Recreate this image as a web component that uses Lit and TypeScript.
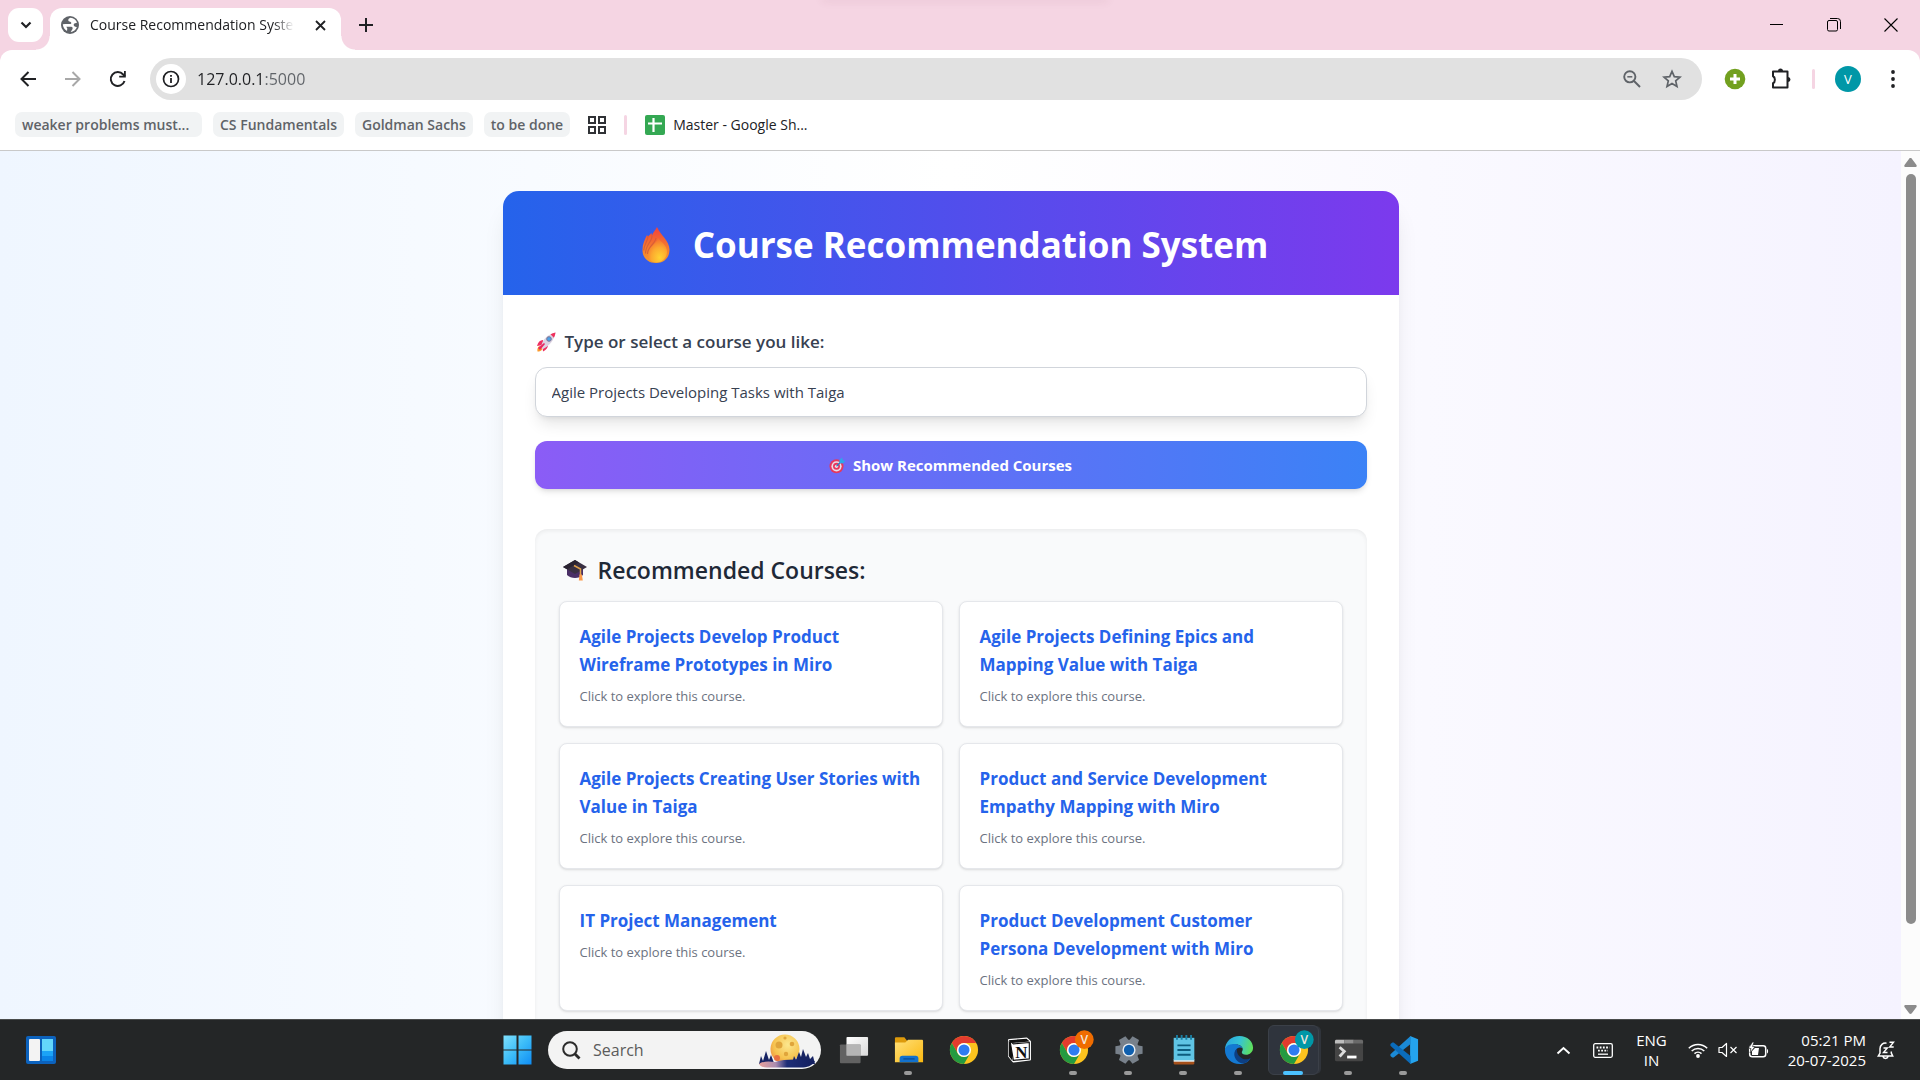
import { LitElement, html, css, svg } from "lit";
import { customElement, property } from "lit/decorators.js";

const sans = css`"Open Sans", "Noto Sans", "Segoe UI", sans-serif`;

const reset = css`
  *, *::before, *::after { box-sizing: border-box; }
  button, input { font: inherit; color: inherit; margin: 0; }
  button { border: 0; padding: 0; background: none; display: grid; place-items: center; }
  a { color: inherit; text-decoration: none; }
  svg { display: block; flex: none; }
`;

@customElement("browser-chrome")
export class BrowserChrome extends LitElement {
  static styles = [reset, css`
    :host { display: block; background: #f5d5e3; color: #202124; }
    .tabs { display: flex; height: 50px; padding: 8px 0 0 8px; align-items: flex-start; position: relative; }
    .tabs::before { content: ""; position: absolute; left: 822px; width: 286px; top: -4px; height: 4px; box-shadow: 0 1px 8px rgba(120, 60, 90, 0.12); }
    .tab-search { width: 35px; height: 34px; border-radius: 11px; background: #fff; }
    .tab { position: relative; display: flex; align-items: center; width: 291px; height: 42px; margin-left: 7px; padding: 0 12px 8px 11px; background: #fff; border-radius: 12px 12px 0 0; }
    .tab::before, .tab::after { content: ""; position: absolute; bottom: 0; width: 14px; height: 14px; }
    .tab::before { right: 100%; background: radial-gradient(circle at 0 0, transparent 13px, #fff 14px); }
    .tab::after { left: 100%; background: radial-gradient(circle at 100% 0, transparent 13px, #fff 14px); }
    .tab-title { flex: 1; margin-left: 11px; margin-right: 14px; overflow: hidden; white-space: nowrap; font-size: 14px; line-height: 20px; mask-image: linear-gradient(90deg, #000 88%, transparent 98%); }
    .tab-close { width: 17px; height: 20px; }
    .new-tab { width: 34px; height: 34px; margin-left: 8px; }
    .window { margin-left: auto; display: flex; padding-right: 1px; }
    .window button { width: 57px; height: 34px; }
    .tools { display: flex; align-items: center; height: 58px; padding: 0 15px 0 10px; background: #fff; border-radius: 12px 12px 0 0; }
    .nav { width: 36px; height: 36px; }
    .nav + .nav { margin-left: 9px; }
    .omni { flex: 1; display: flex; align-items: center; height: 42px; margin-left: 14px; padding: 0 10px 0 6px; border-radius: 21px; background: #e1e1e1; }
    .info { width: 30px; height: 30px; border-radius: 50%; background: #fff; }
    .url { flex: 1; min-width: 0; height: 30px; margin-left: 11px; padding: 0; border: 0; outline: 0; font-size: 16px; color: transparent; background: linear-gradient(90deg, #202124 67px, #5f6368 67px); background-clip: text; -webkit-background-clip: text; }
    .omni .act { width: 40px; height: 36px; }
    .ext { width: 32px; height: 36px; margin-left: 17px; }
    .ext + .ext { margin-left: 14px; }
    .rule { width: 3px; height: 20px; border-radius: 2px; background: #f5d5e3; }
    .tools .rule { margin: 0 20px 0 15px; }
    .avatar { width: 26px; height: 26px; border-radius: 50%; background: #0097a7; color: #fff; font-size: 13px; }
    .menu { width: 24px; height: 36px; margin-left: 20px; }
    .marks { display: flex; align-items: center; gap: 11px; height: 43px; padding: 0 15px 9px; background: #fff; border-bottom: 1px solid #c9c9c9; font-size: 14px; line-height: 20px; }
    .chip { height: 25px; padding: 0 7px; border-radius: 7px; background: #f1f3f4; color: #5f6368; font-weight: 600; font-size: 14px; display: flex; align-items: center; white-space: nowrap; }
    .wide { width: 187px; }
    .apps { margin: 0 7px; }
    .sheet { display: flex; align-items: center; gap: 8px; margin-left: 7px; }
  `];

  render() {
    return html`
      <div class="tabs">
        <button class="tab-search" aria-label="Search tabs">
          <svg width="12" height="8" viewBox="0 0 12 8"><path d="M1.5 1.5 6 6l4.500-4.500" fill="none" stroke="#202124" stroke-width="2.200"/></svg>
        </button>
        <div class="tab">
          <svg width="18" height="18" viewBox="0 0 18 18"><circle cx="9" cy="9" r="9" fill="#5f6368"/><path d="M9.500 1.800c-1.500.4-2.400 1.500-2.200 2.700.3 1.300 1.900 1 2.700 1.700.8.800.1 1.900-1.200 1.900H4.200L1.800 8.300c.1 2.900 1.800 5.400 4.200 6.600l.3-2.500-1-1.700 4.800.1c1.700.2 1.900 1.400 1.200 2.600l-1.700 2.700c3-.5 5.300-2.500 6.300-5.200-1.300.2-2.700-.2-3.100-1.300-.5-1.500.5-2.500 2.400-2.600L16 6.500c-.9-2.500-3.300-4.400-6.500-4.700z" fill="#fff"/></svg>
          <span class="tab-title">Course Recommendation System</span>
          <button class="tab-close" aria-label="Close tab">
            <svg width="11" height="11" viewBox="0 0 11 11"><path d="m1 1 9 9m0-9-9 9" stroke="#202124" stroke-width="1.800"/></svg>
          </button>
        </div>
        <button class="new-tab" aria-label="New tab">
          <svg width="14" height="14" viewBox="0 0 14 14"><path d="M7 0v14M0 7h14" stroke="#202124" stroke-width="2"/></svg>
        </button>
        <div class="window">
          <button aria-label="Minimize"><svg width="14" height="14" viewBox="0 0 14 14"><path d="M0 6.500h13" stroke="#000"/></svg></button>
          <button aria-label="Restore"><svg width="14" height="14" viewBox="0 0 14 14"><g fill="none" stroke="#000"><rect x=".5" y="2.500" width="10" height="10.500" rx="1.500"/><path d="M3 .5h7.500a3 3 0 0 1 3 3V11"/></g></svg></button>
          <button aria-label="Close window"><svg width="14" height="14" viewBox="0 0 14 14"><path d="m.5.5 13 13m0-13-13 13" stroke="#000" stroke-width="1.100"/></svg></button>
        </div>
      </div>
      <div class="tools">
        <button class="nav" aria-label="Back"><svg width="16" height="16" viewBox="0 0 16 16"><path d="M16 8H2M8.500 1 1.500 8l7 7" fill="none" stroke="#202124" stroke-width="2"/></svg></button>
        <button class="nav" aria-label="Forward"><svg width="16" height="16" viewBox="0 0 16 16"><path d="M0 8h14M7.500 1l7 7-7 7" fill="none" stroke="#a8a8a8" stroke-width="2"/></svg></button>
        <button class="nav" aria-label="Reload"><svg width="18" height="18" viewBox="0 0 18 18"><path d="M15.500 11a7 7 0 1 1-1.300-6.500L16 6.300" fill="none" stroke="#202124" stroke-width="2"/><path d="M16.800 1v6.600h-6.600V5.700H15V1z" fill="#202124"/></svg></button>
        <div class="omni">
          <button class="info" aria-label="View site information"><svg width="18" height="18" viewBox="0 0 18 18"><circle cx="9" cy="9" r="7.500" fill="none" stroke="#202124" stroke-width="1.700"/><path d="M9 8v5M9 5v1.800" stroke="#202124" stroke-width="1.800"/></svg></button>
          <input class="url" aria-label="Address" value="127.0.0.1:5000">
          <button class="act" aria-label="Zoom"><svg width="18" height="18" viewBox="0 0 18 18"><g fill="none" stroke="#5f6368" stroke-width="1.900"><circle cx="6.800" cy="6.800" r="5.600"/><path d="m11 11 6 6"/><path d="M4.300 6.800h5" stroke-width="1.500"/></g></svg></button>
          <button class="act" aria-label="Bookmark this page"><svg width="20" height="20" viewBox="0 0 20 20"><path d="m10 2.300 2.300 5.300 5.700.5-4.300 3.800 1.300 5.700-5-3-5 3 1.300-5.700L2 8.100l5.700-.5z" fill="none" stroke="#5f6368" stroke-width="1.700"/></svg></button>
        </div>
        <button class="ext" aria-label="Add-on"><svg width="22" height="22" viewBox="0 0 22 22"><circle cx="11" cy="11" r="10.300" fill="#72a01f"/><path d="M11 6v10M6 11h10" stroke="#fff" stroke-width="3"/></svg></button>
        <button class="ext" aria-label="Extensions"><svg width="22" height="22" viewBox="0 0 22 22"><path d="M3 3.500h14.500v16H3v-4.300c2.500-1 2.500-6 0-7z" fill="none" stroke="#202124" stroke-width="2" stroke-linejoin="round"/><path d="M8 3a2.500 2.500 0 0 1 5 0zM18 9a2.500 2.500 0 0 1 0 5z" fill="#202124"/></svg></button>
        <span class="rule"></span>
        <button class="avatar" aria-label="Profile">V</button>
        <button class="menu" aria-label="Menu"><svg width="4" height="18" viewBox="0 0 4 18" fill="#202124"><circle cx="2" cy="2" r="1.900"/><circle cx="2" cy="9" r="1.900"/><circle cx="2" cy="16" r="1.900"/></svg></button>
      </div>
      <nav class="marks" aria-label="Bookmarks">
        <button class="chip wide">weaker problems must...</button>
        <button class="chip">CS Fundamentals</button>
        <button class="chip">Goldman Sachs</button>
        <button class="chip">to be done</button>
        <button class="apps" aria-label="Apps"><svg width="18" height="18" viewBox="0 0 18 18" fill="none" stroke="#303236" stroke-width="2"><path d="M1 1h6v6H1zM11 1h6v6h-6zM1 11h6v6H1zM11 11h6v6h-6z"/></svg></button>
        <span class="rule"></span>
        <a class="sheet" href="#sheet"><svg width="20" height="20" viewBox="0 0 20 20"><rect width="20" height="20" rx="2" fill="#34a853"/><path d="M8.500 3v14M3 8.500h14" stroke="#fff" stroke-width="2.200"/></svg>Master - Google Sh...</a>
      </nav>`;
  }
}

@customElement("course-card")
export class CourseCard extends LitElement {
  @property() heading = "";
  static styles = [reset, css`
    :host { display: block; }
    .card { display: block; height: 100%; padding: 21px 20px 20px; background: #fff; border: 1px solid #e5e7eb; border-radius: 8px; box-shadow: 0 1px 3px rgba(0, 0, 0, 0.1), 0 1px 2px -1px rgba(0, 0, 0, 0.1); }
    .title { margin: 0; font-size: 17px; line-height: 28px; font-weight: 700; color: #2563eb; }
    .note { margin: 7px 0 0; font-size: 13px; line-height: 20px; color: #6b7280; }
  `];
  render() {
    return html`<a class="card" href="#course">
      <h3 class="title">${this.heading}</h3>
      <p class="note">Click to explore this course.</p>
    </a>`;
  }
}

const courses = [
  "Agile Projects Develop Product Wireframe Prototypes in Miro",
  "Agile Projects Defining Epics and Mapping Value with Taiga",
  "Agile Projects Creating User Stories with Value in Taiga",
  "Product and Service Development Empathy Mapping with Miro",
  "IT Project Management",
  "Product Development Customer Persona Development with Miro",
];

@customElement("course-page")
export class CoursePage extends LitElement {
  static styles = [reset, css`
    :host { display: flex; min-height: 0; overflow: hidden; background: #fcfcfc; }
    .view { flex: 1; overflow: hidden; padding: 40px 24px; background: linear-gradient(90deg, #eff6ff, #fff 50%, #f5f3ff); }
    .sheet { max-width: 896px; margin: 0 auto; background: #fff; border-radius: 16px; box-shadow: 0 20px 25px -5px rgba(0, 0, 0, 0.1), 0 8px 10px -6px rgba(0, 0, 0, 0.1); }
    .hero { display: flex; align-items: center; justify-content: center; gap: 22px; padding: 34px 24px 30px 32px; background: linear-gradient(90deg, #2563eb, #7c3aed); border-radius: 16px 16px 0 0; color: #fff; }
    .hero h1 { margin: 0; font-size: 35px; line-height: 40px; font-weight: 700; }
    .body { padding: 33px 32px 32px; }
    .label { display: flex; align-items: center; gap: 8px; margin-bottom: 11px; font-size: 17px; line-height: 28px; font-weight: 600; color: #374151; }
    .field { display: block; width: 100%; height: 50px; padding: 0 16px; border: 1px solid #d1d5db; border-radius: 12px; outline: 0; background: #fff; color: #374151; font-size: 15px; box-shadow: 0 10px 15px -3px rgba(0, 0, 0, 0.1), 0 4px 6px -4px rgba(0, 0, 0, 0.1); }
    .submit { display: flex; align-items: center; justify-content: center; gap: 7px; width: 100%; height: 48px; margin: 24px 0 40px; border-radius: 12px; background: linear-gradient(90deg, #8b5cf6, #3b82f6); color: #fff; font-size: 15px; font-weight: 700; box-shadow: 0 4px 6px -1px rgba(0, 0, 0, 0.1), 0 2px 4px -2px rgba(0, 0, 0, 0.1); }
    .panel { padding: 25px 24px 24px; border-radius: 12px; background: #f9fafb; box-shadow: inset 0 2px 4px rgba(0, 0, 0, 0.06); }
    .panel h2 { display: flex; align-items: center; gap: 10px; margin: 0 0 15px; padding-left: 3px; font-size: 23px; line-height: 32px; font-weight: 600; color: #1f2937; }
    .grid { display: grid; grid-template-columns: 1fr 1fr; gap: 16px; }
    .bar { width: 19px; display: flex; flex-direction: column; align-items: center; padding: 7px 0 5px; }
    .track { flex: 1; width: 10px; margin: 7px 0; }
    .thumb { height: 91%; border-radius: 5px; background: #8b8b8b; }
  `];

  private flame = svg`<svg width="30" height="38" viewBox="0 0 30 38">
    <defs>
      <linearGradient id="f1" x1="0" y1="0" x2="0" y2="1"><stop offset="0" stop-color="#f2403a"/><stop offset=".55" stop-color="#f4792f"/><stop offset="1" stop-color="#f59a2c"/></linearGradient>
      <radialGradient id="f2" cx=".62" cy=".8" r=".75"><stop offset="0" stop-color="#ffd233"/><stop offset=".55" stop-color="#fca92f"/><stop offset="1" stop-color="#f5702f"/></radialGradient>
    </defs>
    <path d="M16 1c-1.500 3-4 5.500-5 8.500L10.500 7 7 10.500 6 9C3.500 14 1.500 18 1.500 24c0 8 5.500 13 13.500 13s13.500-5 13.500-13.500C28.500 15 19.500 9 16 1z" fill="url(#f1)"/>
    <path d="M17 12c-1 6-10.500 9-10.500 16 0 5 4 8.500 9 8.500s10.500-4 10.500-11c0-6.500-6-9.500-9-13.500z" fill="url(#f2)"/>
    <path d="M7 10.500c0 4-4 8-4.300 14M11 9.500c.5 6-6.500 9-6.500 18M15 12c-1 6-8.500 9-8.500 16" fill="none" stroke="#cf5a3a" stroke-opacity=".8" stroke-width="1.100"/>
  </svg>`;

  private rocket = svg`<svg width="22" height="22" viewBox="0 0 22 22">
    <path d="M4.500 15c-2 1-2.500 3.500-2 5.500C4.500 20.500 6.500 20 7.500 18z" fill="#fc9a2c"/>
    <path d="M8 9c-3 0-5 2-6 6l6-1zM13 14c0 3-2 5-5 6.500l-.5-6z" fill="#ee2f62"/>
    <path d="M6 16C7 9 12 3.500 20.500 1.500 19.500 9 14 15 8 18z" fill="#dcd3e2"/>
    <path d="M15.500 3.300c1.500-1 3.200-1.500 5-1.800-.2 2-.7 3.700-1.600 5.300z" fill="#f0305c"/>
    <circle cx="14" cy="8" r="2.300" fill="#4da3e8" stroke="#7b7594"/>
    <path d="M3 17l6-5 1 1-5 6z" fill="#e8265f"/>
  </svg>`;

  private target = svg`<svg width="17" height="17" viewBox="0 0 17 17">
    <circle cx="7.500" cy="9.300" r="7" fill="#e6385f"/><circle cx="7.500" cy="9.300" r="5.100" fill="#eadfe8"/><circle cx="7.500" cy="9.300" r="3.500" fill="#e6385f"/><circle cx="7.500" cy="9.300" r="1.600" fill="#f2e6ee"/>
    <path d="m7.500 9.300 5-5" stroke="#2b7fc4" stroke-width="1.300"/><path d="m10.500 6-.2-2.800L13 .5l.8 2.700 2.700.8-2.800 2.500z" fill="#2da8ea"/>
  </svg>`;

  private cap = svg`<svg width="26" height="24" viewBox="0 0 26 24">
    <path d="M5 10v7c4 4 12 4 16 0v-7z" fill="#4a2f66"/><path d="M13 2 1 9l12 7 12-7z" fill="#3a3042"/><path d="M13 2 1 9l4 2.300L17 4.500z" fill="#2a2331"/>
    <path d="M12 7.500 18.500 11v7" fill="none" stroke="#e0a04a" stroke-width="1.500"/><path d="M17.500 16.500h2.400l.9 6h-4z" fill="#fb9a4b"/>
  </svg>`;

  render() {
    return html`
      <main class="view">
        <div class="sheet">
          <header class="hero">${this.flame}<h1>Course Recommendation System</h1></header>
          <div class="body">
            <label class="label" for="course">${this.rocket}Type or select a course you like:</label>
            <input class="field" id="course" value="Agile Projects Developing Tasks with Taiga">
            <button class="submit">${this.target}Show Recommended Courses</button>
            <section class="panel">
              <h2>${this.cap}Recommended Courses:</h2>
              <div class="grid">
                ${courses.map((c) => html`<course-card .heading=${c}></course-card>`)}
              </div>
            </section>
          </div>
        </div>
      </main>
      <div class="bar">
        <svg width="13" height="9" viewBox="0 0 13 9"><path d="M6.500 0c.8 0 1.300.5 1.700 1.200L12.500 7c.5 1 .2 2-.8 2H1.300c-1 0-1.300-1-.8-2l4.300-5.800C5.200.5 5.700 0 6.500 0z" fill="#8b8b8b"/></svg>
        <div class="track"><div class="thumb"></div></div>
        <svg width="13" height="9" viewBox="0 0 13 9"><path d="M6.500 9c.8 0 1.300-.5 1.700-1.200L12.500 2c.5-1 .2-2-.8-2H1.300c-1 0-1.300 1-.8 2l4.300 5.800C5.200 8.500 5.700 9 6.500 9z" fill="#8b8b8b"/></svg>
      </div>`;
  }
}

const chromeLogo = svg`
  <circle cx="16" cy="16" r="15" fill="#fcc31e"/>
  <path d="M3 8.500A15 15 0 0 1 29 8.500H16a7.500 7.500 0 0 0-6.500 11.200z" fill="#e33b2e"/>
  <path d="M3 8.500 9.500 19.700A7.500 7.500 0 0 0 16 23.500c2.700 0 5-1.300 6.500-3.700L16 31A15 15 0 0 1 3 8.500z" fill="#249a41"/>
  <circle cx="16" cy="16" r="7.500" fill="#fff"/><circle cx="16" cy="16" r="5.900" fill="#2f7cf0"/>`;

const badge = (fill: string) => svg`
  <circle cx="27" cy="5" r="10" fill="${fill}"/>
  <text x="27" y="10" text-anchor="middle" font-size="13" font-weight="600" fill="#f3e7dc">V</text>`;

const teeth = [0, 60, 120, 180, 240, 300];

const apps = [
  { name: "Task view", mark: "", art: svg`
    <defs><linearGradient id="tv" x1="0" y1="0" x2="1" y2="1"><stop offset="0" stop-color="#fff"/><stop offset="1" stop-color="#d9d9d9"/></linearGradient></defs>
    <rect x="8" y="2" width="23" height="20" rx="1" fill="url(#tv)"/><rect x="1" y="10" width="22" height="20" rx="1" fill="#777" fill-opacity=".75"/><path d="M8 10h15v12H8z" fill="#b5b5b5"/>` },
  { name: "File Explorer", mark: "on", art: svg`
    <defs><linearGradient id="fe" x1="0" y1="0" x2="1" y2="1"><stop offset="0" stop-color="#ffe07a"/><stop offset="1" stop-color="#fbb80f"/></linearGradient></defs>
    <path d="M1 4c0-1 .5-1.500 1.500-1.500H11L14 6v5H1z" fill="#dd9a0b"/><path d="M1 8h11l3-3h14.500c1 0 1.500.5 1.500 1.500V29H1z" fill="url(#fe)"/><path d="M6 29v-4c0-2 1-3 3-3h14c2 0 3 1 3 3v4z" fill="#1271cd"/><path d="M10 25.500h12" stroke="#0a4f9c" stroke-width="1.500"/>` },
  { name: "Google Chrome", mark: "", art: chromeLogo },
  { name: "Notion", mark: "", art: svg`
    <path d="M5.500 5.500 24 4l3.500 3v19L10 28l-4.500-5.500z" fill="#fff" stroke="#fff" stroke-width="2.500" stroke-linejoin="round"/>
    <path d="M5 5.500 24 4l3.500 3L9 8.500zM5 6v16.500L9 27.500V9z" fill="#111"/><path d="M6.500 6.500 10 9.500 27 8v17.500L10 27z" fill="#fff" stroke="#111" stroke-width="1.200"/>
    <text x="18.500" y="24" text-anchor="middle" font-family="Liberation Serif, serif" font-weight="700" font-size="18" fill="#111">N</text>` },
  { name: "Chrome, work profile", mark: "on", art: svg`${chromeLogo}${badge("#ef6c00")}` },
  { name: "Settings", mark: "on", art: svg`
    <g fill="#78818b">${teeth.map((a) => svg`<path d="M12 1.500h8l1 6H11z" transform="rotate(${a + 30} 16 16)"/>`)}<circle cx="16" cy="16" r="11"/></g>
    <circle cx="16" cy="16" r="7" fill="#e7edf3"/><circle cx="16" cy="16" r="5.500" fill="#0f5fae"/>` },
  { name: "Notepad", mark: "on", art: svg`
    <path d="M5 28h22v2.500c0 .5-.5 1-1 1H6c-.5 0-1-.5-1-1z" fill="#a6501a"/><path d="M5 26h22v2.500H5z" fill="#f2f2f2"/>
    <rect x="5" y="3" width="22" height="24" fill="#5fc4e4"/><path d="M9 11h14M9 16h14M9 21h14" stroke="#0d5c7e" stroke-width="2"/>
    <path d="M8.500 0v5m5-5v5m5-5v5m5-5v5" stroke="#1a7fa3" stroke-width="2"/>` },
  { name: "Microsoft Edge", mark: "on", art: svg`
    <defs><linearGradient id="ed" x1="0" y1=".3" x2="1" y2=".5"><stop offset="0" stop-color="#2aa6e0"/><stop offset=".5" stop-color="#35c3d6"/><stop offset="1" stop-color="#5fe05a"/></linearGradient></defs>
    <path d="M1 16C1 7 8 1 16.500 1 25 1 31 7 31 13.500c0 4.500-3.500 7.500-7.500 7.500-3 0-4.500-1-4.500-2.500 0-1 1-1.500 1-3.500 0-2.500-3-5-7-5C6 10 1 14 1 16z" fill="url(#ed)"/>
    <path d="M1 16c0-3.500 4-6.500 9-6.500 5 0 9 2 10 5-1.500-1.300-4-1.500-6 0-3 2.500-2.500 8 1.500 11 4 3 9 2 12.500-.5C26 29 21 31 16.500 31 8 31 1 24.500 1 16z" fill="#1479d2"/>
    <path d="M14 14.500c-4 3-4 9 0 13 3 3 6 3 8 2.500 3-1 5-3 6.500-5.500-2.500 1.500-6 2-9 .5-4-2-6.500-6-5.500-10.500z" fill="#0d3f82"/>` },
  { name: "Chrome, current profile", mark: "active", art: svg`${chromeLogo}${badge("#0097a7")}` },
  { name: "Terminal", mark: "on", art: svg`
    <rect x="1" y="5" width="30" height="23" rx="2" fill="#454545"/><path d="M1 9V7c0-1.500.5-2 2-2h8v4z" fill="#bdbdbd"/><path d="M11 5h10v4H11z" fill="#8f8f8f"/><path d="M21 5h8c1.500 0 2 .5 2 2v2H21z" fill="#6a6a6a"/>
    <path d="m6 13 5 4.500L6 23" fill="none" stroke="#dcdcdc" stroke-width="3"/><path d="M14 23.500h10" stroke="#fff" stroke-width="3"/>` },
  { name: "Visual Studio Code", mark: "on", art: svg`
    <path d="M22.500 1 31 4.500v23L22.500 31z" fill="#24a3ee"/><path d="M23 1 1.500 20.500v2l2 1.500h1.500L23 9.500z" fill="#1b8ad6"/><path d="M23 31 1.500 11.500v-2l2-1.500H5L23 22.500z" fill="#0b6cbb"/>` },
];

@customElement("task-bar")
export class TaskBar extends LitElement {
  static styles = [reset, css`
    :host { display: grid; grid-template-columns: 1fr auto 1fr; align-items: center; height: 60px; background: #242627; border-top: 1px solid #4a4c4c; color: #fff; }
    .widgets { width: 30px; height: 30px; margin-left: 26px; }
    .middle { display: flex; align-items: center; height: 100%; }
    .app { position: relative; width: 55px; height: 52px; border-radius: 6px; }
    .app svg { overflow: visible; }
    .app::after { content: ""; position: absolute; bottom: 1px; left: 23px; width: 8px; height: 4px; border-radius: 2px; background: transparent; }
    .app.on::after { background: #9a9a9a; }
    .active::before { content: ""; position: absolute; inset: 1px 2px; border: 1px solid #3b4048; border-radius: 6px; background: #2f343d; box-shadow: 3px 0 0 -1px #30343b; }
    .active svg { position: relative; }
    .app.active::after { left: 17px; width: 20px; background: #4cc2ff; }
    .search { display: flex; align-items: center; gap: 12px; width: 273px; height: 38px; margin: 0 5px 0 4px; padding: 0 6px 0 14px; border-radius: 19px; background: #f3f3f3; color: #5b5b5b; }
    .search input { flex: 1; min-width: 0; border: 0; padding: 0; background: none; outline: 0; font-size: 16px; }
    .search input::placeholder { color: #5b5b5b; opacity: 1; }
    .tray { justify-self: end; display: flex; align-items: center; padding-right: 25px; font-size: 15px; line-height: 20px; }
    .lang { margin: 0 21px 0 23px; text-align: center; }
    .state { display: flex; align-items: center; gap: 10px; }
    .clock { margin: 0 11px 0 19px; text-align: right; }
    .up { margin-right: 22px; }
  `];

  render() {
    return html`
      <button class="widgets" aria-label="Widgets"><svg width="30" height="28" viewBox="0 0 30 28"><rect width="30" height="28" rx="2" fill="#0c62bd"/><rect x="3" y="3" width="11" height="22" rx="1" fill="#f3f3f3"/><path d="M16 3h11v12H16z" fill="#63d6fb"/><path d="M16 15h11v5H16z" fill="#1ba3f7"/><path d="M16 20h11v5H16z" fill="#0a84e8"/></svg></button>
      <div class="middle">
        <button class="app" aria-label="Start"><svg width="30" height="30" viewBox="0 0 30 30"><defs><linearGradient id="win" x1="0" y1="0" x2="1" y2="1"><stop offset="0" stop-color="#7fe0fc"/><stop offset=".5" stop-color="#3cbcf8"/><stop offset="1" stop-color="#0f8df5"/></linearGradient></defs><path d="M1.500.5h13v14h-13zm15 0h13v14h-13zm-15 15h13v14h-13zm15 0h13v14h-13z" fill="url(#win)"/></svg></button>
        <label class="search">
          <svg width="19" height="19" viewBox="0 0 19 19"><g fill="none" stroke="#2b2b2b" stroke-width="2"><circle cx="8" cy="8" r="6.800"/><path d="m13 13 4.500 4.500" stroke-width="2.800"/></g></svg>
          <input type="search" placeholder="Search" aria-label="Search">
          <svg width="56" height="35" viewBox="0 0 56 35">
            <defs>
              <radialGradient id="mo" cx=".6" cy=".35" r=".75"><stop offset="0" stop-color="#fce78e"/><stop offset=".65" stop-color="#f6c34f"/><stop offset="1" stop-color="#ee8b3d"/></radialGradient>
              <linearGradient id="la" x1="0" y1="0" x2="1" y2="0"><stop offset="0" stop-color="#e9a19b"/><stop offset=".3" stop-color="#a98cb0"/><stop offset=".5" stop-color="#1d2d77"/><stop offset="1" stop-color="#131f5e"/></linearGradient>
            </defs>
            <circle cx="26" cy="16" r="14.500" fill="url(#mo)"/><g fill="#e0a53b"><circle cx="20" cy="12" r="3.500"/><circle cx="33" cy="11" r="2.300"/><circle cx="27" cy="21" r="2.200"/><circle cx="26" cy="5" r="1.600"/></g><circle cx="18" cy="25" r="3" fill="#e8713f"/>
            <path d="m0 31 2-8 2 5 3-10 3 9 2-5 3 8zm33 0 2-8 2 4 3-8 2 5 2-8 3 8 2-4 2 6 3-3 2 8z" fill="#172464"/>
            <path d="M0 31c4-3 10-3 16-2 10-3 24-3 40-1-3 5-8 6.500-14 6.500H8C4 34.500 1 33 0 31z" fill="url(#la)"/>
          </svg>
        </label>
        ${apps.map((a) => html`<button class="app ${a.mark}" aria-label=${a.name}><svg width="30" height="30" viewBox="0 0 32 32">${a.art}</svg></button>`)}
      </div>
      <div class="tray">
        <button class="up" aria-label="Show hidden icons"><svg width="15" height="9" viewBox="0 0 15 9"><path d="m1.500 7.500 6-5.500 6 5.500" fill="none" stroke="#fff" stroke-width="1.900"/></svg></button>
        <button aria-label="Touch keyboard"><svg width="20" height="15" viewBox="0 0 20 15"><rect x=".7" y=".7" width="18.600" height="13.600" rx="1.500" fill="none" stroke="#fff" stroke-width="1.300"/><path d="M3.500 4.500h13M5 7.700h10" stroke="#fff" stroke-width="1.800" stroke-dasharray="1.800 1.400"/><path d="M5 11.200h10" stroke="#fff" stroke-width="1.300"/></svg></button>
        <div class="lang">ENG<br>IN</div>
        <div class="state">
          <svg width="20" height="16" viewBox="0 0 20 16"><g fill="none" stroke="#fff" stroke-width="1.500"><path d="M.8 6.300a13 13 0 0 1 18.400 0M3.700 9a9 9 0 0 1 12.600 0M6.500 11.600a5 5 0 0 1 7 0"/></g><circle cx="10" cy="14" r="1.900" fill="#fff"/></svg>
          <svg width="20" height="16" viewBox="0 0 20 16"><g fill="none" stroke="#fff" stroke-width="1.200"><path d="M1 5.500h3L8.500 1.500v13L4 10.500H1z" stroke-linejoin="round"/><path d="m12.500 5 6 6m0-6-6 6"/></g></svg>
          <svg width="21" height="16" viewBox="0 0 21 16"><rect x="1.700" y="3.700" width="16" height="11" rx="2.500" fill="none" stroke="#fff" stroke-width="1.500"/><path d="M19 7c1.500.3 1.500 4.200 0 4.500zM7 6h4l-1 7H4V9z" fill="#fff"/><path d="M4.500 0 .5 6.500H3L2 11l5-6.500H4.500L6 0z" fill="#fff" stroke="#242627" stroke-width=".6"/></svg>
        </div>
        <div class="clock">05:21 PM<br>20-07-2025</div>
        <button aria-label="Notifications"><svg width="18" height="19" viewBox="0 0 18 19"><g fill="none" stroke="#fff" stroke-width="1.500"><path d="M9.500 2.200C6 1.500 3 4.200 3 7.700V12l-1.700 3h14.400L14.300 12v-1.500M6 15.500c.5 2.500 4.500 2.500 5 0"/><path d="M6.500 7h3.800l-3.800 4.500h4M12.500 1.200h4L12.700 6h4" stroke-width="1.400"/></g></svg></button>
      </div>`;
  }
}

@customElement("app-root")
export class AppRoot extends LitElement {
  static styles = css`
    :host { display: grid; grid-template-rows: auto minmax(0, 1fr) auto; height: 100vh; font-family: ${sans}; }
  `;
  render() {
    return html`<browser-chrome></browser-chrome><course-page></course-page><task-bar></task-bar>`;
  }
}
